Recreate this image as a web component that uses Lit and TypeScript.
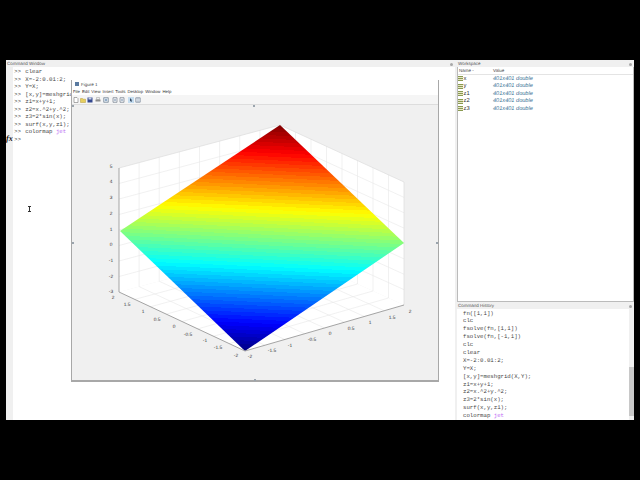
import { LitElement, html, css, svg } from "lit";
import { customElement } from "lit/decorators.js";

const CMD = ["clear", "X=-2:0.01:2;", "Y=X;", "[x,y]=meshgrid(X,Y);", "z1=x+y+1;", "z2=x.^2+y.^2;", "z3=2*sin(x);", "surf(x,y,z1);"];
const HIST = ["fn([1,1])", "clc", "fsolve(fn,[1,1])", "fsolve(fn,[-1,1])", "clc", "clear", "X=-2:0.01:2;", "Y=X;", "[x,y]=meshgrid(X,Y);", "z1=x+y+1;", "z2=x.^2+y.^2;", "z3=2*sin(x);", "surf(x,y,z1);"];
const VARS = ["x", "y", "z1", "z2", "z3"];
const MENU = ["File", "Edit", "View", "Insert", "Tools", "Desktop", "Window", "Help"];

function jet(t: number): string {
  const c = (v: number) => Math.round(255 * Math.max(0, Math.min(1, v)));
  const r = 1.5 - Math.abs(4 * t - 3);
  const g = 1.5 - Math.abs(4 * t - 2);
  const b = 1.5 - Math.abs(4 * t - 1);
  return `rgb(${c(r)},${c(g)},${c(b)})`;
}

function bandStops() {
  const n = 64;
  const out = [];
  for (let i = 0; i < n; i++) {
    const col = jet((n - 1 - i + 0.5) / n);
    out.push(svg`<stop offset=${i / n} stop-color=${col}></stop><stop offset=${(i + 1) / n} stop-color=${col}></stop>`);
  }
  return out;
}

type P = [number, number];
const TL: P = [119, 168], TB: P = [280, 125], TR: P = [404, 182];
const BL: P = [119, 292], BB: P = [280, 249], BR: P = [404, 305], BF: P = [245, 351];
const lerp = (a: P, b: P, t: number): P => [a[0] + (b[0] - a[0]) * t, a[1] + (b[1] - a[1]) * t];
const line = (a: P, b: P, cls: string) => svg`<line class=${cls} x1=${a[0]} y1=${a[1]} x2=${b[0]} y2=${b[1]}></line>`;
const poly = (pts: P[], cls: string) => svg`<polygon class=${cls} points=${pts.map((p) => p.join(",")).join(" ")}></polygon>`;

function grid() {
  const out = [];
  for (let i = 1; i < 8; i++) {
    const t = i / 8;
    out.push(line(lerp(TL, TB, t), lerp(BL, BB, t), "g"));
    out.push(line(lerp(TB, TR, t), lerp(BB, BR, t), "g"));
    out.push(line(lerp(BL, BF, t), lerp(BB, BR, t), "g"));
    out.push(line(lerp(BF, BR, t), lerp(BL, BB, t), "g"));
    out.push(line(lerp(TL, BL, t), lerp(TB, BB, t), "g"));
    out.push(line(lerp(TB, BB, t), lerp(TR, BR, t), "g"));
  }
  return out;
}

const ZT: [string, number][] = [["5", 167], ["4", 182], ["3", 198], ["2", 214], ["1", 230], ["0", 245], ["-1", 261], ["-2", 277], ["-3", 292]];
const LT: [string, number, number][] = [["2", 113, 298], ["1.5", 127, 305], ["1", 143, 312], ["0.5", 157, 320], ["0", 174, 327], ["-0.5", 188, 335], ["-1", 205, 341], ["-1.5", 218, 348], ["-2", 236, 356]];
const RT: [string, number, number][] = [["-2", 250, 357], ["-1.5", 272, 351], ["-1", 290, 346], ["-0.5", 312, 340], ["0", 330, 334], ["0.5", 351, 329], ["1", 370, 323], ["1.5", 392, 318], ["2", 410, 312]];

const ic = (body: unknown, cls = "") => html`<svg class="ti ${cls}" viewBox="0 0 6 6">${body}</svg>`;
const TOOLS = [
  ic(svg`<path d="M1 .5h3l1 1v4H1z" fill="#fff" stroke="#777" stroke-width=".6"/>`),
  ic(svg`<path d="M.5 1.5h2l.5.7h2.5v3.3H.5z" fill="#e6cf5e" stroke="#b59a3a" stroke-width=".5"/>`),
  ic(svg`<path d="M.5.5h5v5h-5z" fill="#34488f"/><path d="M1.5.5h3v2h-3z" fill="#c8d0e4"/>`),
  ic(svg`<path d="M1.5.5h3v2h-3z" fill="#eee" stroke="#888" stroke-width=".4"/><path d="M.5 2.5h5v2h-5z" fill="#8d8d8d"/>`, "gap"),
  ic(svg`<path d="M.7.7h4.6v4.6H.7z" fill="#dfe6ee" stroke="#6f7f92" stroke-width=".7"/><circle cx="3" cy="3" r="1.1" fill="#7f9fc0"/>`, "gap"),
  ic(svg`<path d="M1 .7h4v4.6H1z" fill="#eef1f5" stroke="#757f8c" stroke-width=".7"/><path d="M2 2.2h2v1.6H2z" fill="#9fb0c4"/>`, "gap2"),
  ic(svg`<path d="M1 .7h4v4.6H1z" fill="#eef1f5" stroke="#757f8c" stroke-width=".7"/><path d="M2 2.2h2v1.6H2z" fill="#9fb0c4"/>`),
  ic(svg`<path d="M0 0h6v6H0z" fill="#c5ddf0"/><path d="M2 1l2.4 2.4H3.2l.6 1.4-.7.3-.6-1.4-.5.7z" fill="#33475f"/>`, "gap2"),
  ic(svg`<path d="M.8.8h4.4v4.4H.8z" fill="#e7edf4" stroke="#6f7f92" stroke-width=".7"/><path d="M3 .8v4.4" stroke="#6f7f92" stroke-width=".4"/>`),
];

@customElement("app-root")
export class AppRoot extends LitElement {
  static styles = css`
    :host { display: block; width: 640px; height: 480px; background: #000; overflow: hidden; position: relative; font-family: "Liberation Sans", Arial, sans-serif; text-rendering: geometricPrecision; }
    .screen { position: absolute; left: 6px; top: 60px; width: 628px; height: 360px; background: #f0f0f0; display: flex; gap: 2px; box-sizing: border-box; overflow: hidden; }
    .left { width: 449px; display: flex; flex-direction: column; flex: none; }
    .right { flex: 1; display: flex; flex-direction: column; min-width: 0; }
    .ttl { height: 6px; line-height: 6px; font-size: 4.5px; color: #555; padding: 0 1px; flex: none; margin-top: 1px; display: flex; justify-content: space-between; }
    .dock { width: 3px; height: 3px; margin: 1.5px 1px; background: #a8a8a8; border-radius: 50%; }
    .cmd { flex: 1; background: #fff; border-left: 7px solid #f0f0f0; padding: 1px 0 0 1px; position: relative; }
    .mono { font-family: "Liberation Mono", "Courier New", monospace; font-size: 5.7px; color: #444; }
    .cl { height: 7.55px; line-height: 7.55px; display: flex; gap: 4.4px; white-space: pre; }
    .kw { color: #a020f0; opacity: .7; }
    .fx { position: absolute; left: -7px; top: 67px; font: italic bold 8px "Liberation Serif", serif; color: #111; }
    .caret { position: absolute; left: 15px; top: 139px; width: 3px; height: 6px; border: solid #333; border-width: 1px 0; box-sizing: border-box; }
    .caret::after { content: ""; position: absolute; left: 1px; top: 0; width: 1px; height: 4px; background: #333; }
    .ws { height: 235px; flex: none; background: #fff; border: 1px solid #bbb; border-top: 0; box-sizing: border-box; }
    .wsh { display: flex; height: 7px; font-size: 4.5px; line-height: 7px; color: #444; border-bottom: 1px solid #e4e4e4; }
    .wsh span:first-child { width: 34px; padding-left: 1px; }
    .row { display: flex; align-items: center; height: 7.5px; }
    .name { width: 35px; display: flex; align-items: center; gap: 0.5px; font-size: 5.8px; color: #333; }
    .ico { width: 5px; height: 5px; background: repeating-linear-gradient(#8a9a50 0 1px, #e6e6c8 1px 2px); flex: none; }
    .val { font-size: 5.6px; font-style: italic; color: #3b7396; }
    .hist { flex: 1; background: #fff; display: flex; min-height: 0; }
    .hlist { flex: 1; padding: 0.5px 0 0 6px; overflow: hidden; }
    .hl { height: 7.9px; line-height: 7.9px; white-space: pre; }
    .sb { width: 5px; background: #f0f0f0; position: relative; }
    .thumb { position: absolute; left: 0; right: 0; top: 58px; bottom: 4px; background: #c8c8c8; }
    .fig { position: absolute; left: 65px; top: 20px; width: 368px; height: 302px; background: #f0f0f0; border: 1px solid #a8a8a8; border-width: 0 1px 2px 1px; box-sizing: border-box; display: flex; flex-direction: column; }
    .ft { height: 8px; background: #fff; display: flex; align-items: center; gap: 2px; padding-left: 3px; font-size: 4.5px; color: #444; flex: none; }
    .logo { width: 4px; height: 4px; background: #5a7aa0; }
    .mb { height: 7px; background: #fff; display: flex; gap: 2px; padding-left: 1px; font-size: 4.3px; line-height: 7px; color: #333; flex: none; }
    .tb { height: 10px; background: #f5f5f5; border-bottom: 1px solid #ddd; display: flex; align-items: center; gap: 0.8px; padding-left: 1px; box-sizing: border-box; flex: none; }
    .ti { width: 6px; height: 6px; flex: none; }
    .gap { margin-left: 1.4px; }
    .gap2 { margin-left: 2.4px; }
    .canvas { flex: 1; position: relative; min-height: 0; }
    .plot { position: absolute; left: -72px; top: -105px; width: 640px; height: 480px; }
    .g { stroke: #e8e8e8; stroke-width: .6; }
    .edge { stroke: #9a9a9a; stroke-width: .9; }
    .top { stroke: #dcdcdc; stroke-width: .7; }
    .wall { fill: #fff; }
    .tk { font: 4.8px "Liberation Sans", Arial, sans-serif; fill: #333; text-anchor: middle; dominant-baseline: central; }
    .handle { fill: #9aa4ad; }
  `;

  render() {
    return html`<div class="screen">
      <div class="left">
        <div class="ttl"><span>Command Window</span><i class="dock"></i></div>
        <div class="cmd mono">
          ${CMD.map((c) => html`<div class="cl"><span>&gt;&gt;</span><span>${c}</span></div>`)}
          <div class="cl"><span>&gt;&gt;</span><span>colormap <span class="kw">jet</span></span></div>
          <div class="cl"><span>&gt;&gt;</span></div>
          <div class="fx">fx</div>
          <div class="caret"></div>
        </div>
      </div>
      <div class="right">
        <div class="ttl"><span>Workspace</span><i class="dock"></i></div>
        <div class="ws">
          <div class="wsh"><span>Name -</span><span>Value</span></div>
          ${VARS.map((v) => html`<div class="row"><span class="name"><i class="ico"></i>${v}</span><span class="val">401x401 double</span></div>`)}
        </div>
        <div class="ttl"><span>Command History</span><i class="dock"></i></div>
        <div class="hist">
          <div class="hlist mono">
            ${HIST.map((h) => html`<div class="hl">${h}</div>`)}
            <div class="hl">colormap <span class="kw">jet</span></div>
          </div>
          <div class="sb"><div class="thumb"></div></div>
        </div>
      </div>
      <div class="fig">
        <div class="ft"><i class="logo"></i>Figure 1</div>
        <div class="mb">${MENU.map((m) => html`<span>${m}</span>`)}</div>
        <div class="tb">${TOOLS}</div>
        <div class="canvas">
          <svg class="plot" viewBox="0 0 640 480">
            <defs>
              <linearGradient id="jet" gradientUnits="userSpaceOnUse" x1="280" y1="125" x2="270.4" y2="352.3">${bandStops()}</linearGradient>
            </defs>
            ${poly([TL, TB, BB, BL], "wall")}${poly([TB, TR, BR, BB], "wall")}${poly([BL, BB, BR, BF], "wall")}
            ${grid()}
            ${line(TL, TB, "top")}${line(TB, TR, "top")}${line(TR, BR, "top")}
            <polygon points="280,125 404,243 245,351 120,231" fill="url(#jet)"></polygon>
            ${line(TL, BL, "edge")}${line(BL, BF, "edge")}${line(BF, BR, "edge")}
            ${ZT.map(([t, y]) => svg`<text class="tk" x="111" y=${y}>${t}</text>`)}
            ${LT.map(([t, x, y]) => svg`<text class="tk" x=${x} y=${y}>${t}</text>`)}
            ${RT.map(([t, x, y]) => svg`<text class="tk" x=${x} y=${y}>${t}</text>`)}
            <rect class="handle" x="72" y="105" width="2" height="2"></rect>
            <rect class="handle" x="253" y="105" width="2" height="2"></rect>
            <rect class="handle" x="72" y="242" width="2" height="2"></rect>
            <rect class="handle" x="436" y="242" width="2" height="2"></rect>
            <rect class="handle" x="254" y="379" width="2" height="2"></rect>
          </svg>
        </div>
      </div>
    </div>`;
  }
}
